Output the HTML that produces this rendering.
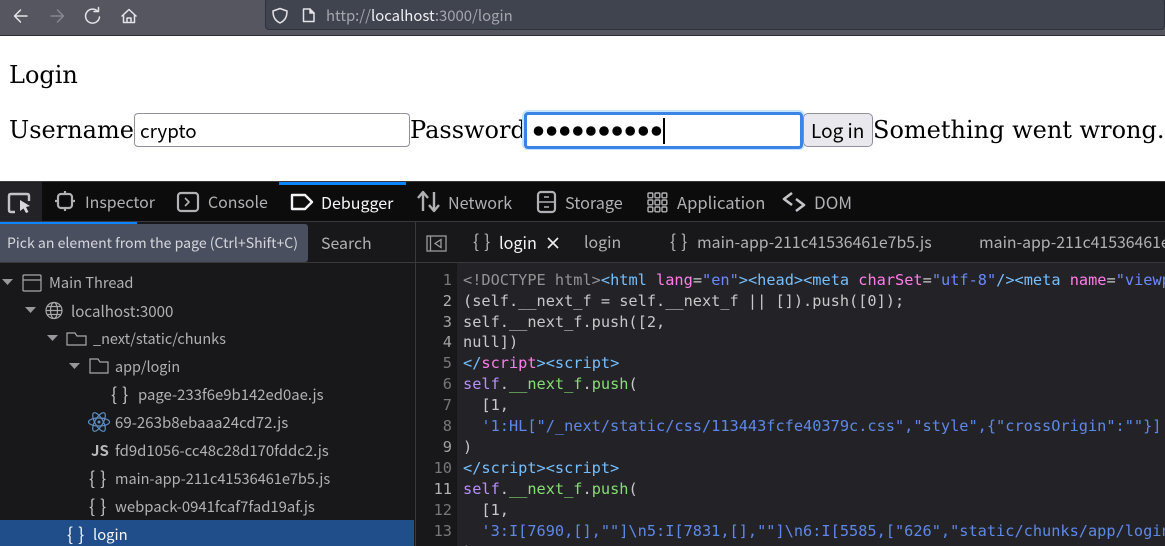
<!DOCTYPE html>
<html><head><meta charset="utf-8"><title>Login</title>
<style>
html,body{margin:0;padding:0;width:1165px;height:546px;overflow:hidden;background:#fff}
#root{position:absolute;left:0;top:0;width:1165px;height:546px;overflow:hidden;background:#fff}
.a,.t,.c,.n{position:absolute;white-space:pre}
.a{display:block}
.t{font-family:"Noto Sans CJK SC","Liberation Sans",sans-serif;font-size:15.9px;line-height:20px;color:#b1b1b3}
.br{font-size:18px;word-spacing:1px;color:#c0c0c2}
.s{font-family:"DejaVu Serif",serif;font-size:24px;line-height:30px;color:#000}
.c{font-family:"DejaVu Sans Mono",monospace;font-size:15.28px;line-height:21px;color:#c8c8ca;left:463px}
.n{font-family:"DejaVu Sans Mono",monospace;font-size:15.28px;line-height:21px;color:#77777b;left:415px;width:37px;text-align:right}
.b{color:#75bfff}.p{color:#ff7de9}.l{color:#6b89ff}.v{color:#b98eff}.g{color:#86de74}.k{color:#5e88e8}
svg{position:absolute;overflow:visible}
</style></head><body>
<div id="root">

<!-- browser chrome -->
<div class="a" style="left:0;top:0;width:1165px;height:35px;background:#55565f"></div>
<div class="a" style="left:0;top:35px;width:1165px;height:1px;background:#2b2a33"></div>
<div class="a" style="left:265px;top:-2px;width:900px;height:32px;background:#40444f;border:1px solid #30323b;border-radius:4px;box-sizing:border-box"></div>
<svg style="left:0;top:0" width="400" height="35" fill="none" stroke-linecap="round" stroke-linejoin="round" stroke-width="1.5">
<path d="M27 16H15M20.5 10 14.5 16 20.5 22" stroke="#e4e4e8"/>
<path d="M51 16H63M57.5 10 63.5 16 57.5 22" stroke="#85868e"/>
<path d="M97.8 11.5A7 7 0 1 0 99.5 17" stroke="#e4e4e8"/><path d="M94 11.5H98.5V7.5" stroke="#e4e4e8"/>
<path d="M122 16 129 9.5 136 16M123.5 15V22.5H134.5V15M127 22.5V18H131V22.5" stroke="#e4e4e8"/>
<path d="M273 11 280 8.5 287 11C287 17 285 20.5 280 23 275 20.5 273 17 273 11Z" stroke="#e4e4e8"/>
<path d="M303.5 9H310L314 13V21.5H303.5Z" stroke="#e4e4e8"/><path d="M310 9V13H314" stroke="#e4e4e8" fill="#e4e4e8"/>
</svg>
<div class="t" style="left:326px;top:6px;font-size:14.9px;color:#a5a6ad">http://<span style="color:#f0f0f4">localhost</span>:3000/login</div>

<!-- page -->
<div class="a s" style="position:absolute;left:9px;top:60px;white-space:pre">Login</div>
<div class="a s" style="position:absolute;left:9px;top:115px;white-space:pre">Username</div>
<div class="a" style="left:134px;top:113px;width:276px;height:34px;border:1px solid #8f8f9d;border-radius:4px;box-sizing:border-box;background:#fff"></div>
<div class="t" style="left:140px;top:121px;font-size:18.8px;color:#000">crypto</div>
<div class="a s" style="position:absolute;left:410px;top:115px;white-space:pre">Password</div>
<div class="a" style="left:522px;top:110px;width:283px;height:40px;border-radius:6px;background:#c7e4fd"></div>
<div class="a" style="left:524px;top:112px;width:279px;height:37px;border:3px solid #3a84e6;border-radius:4px;box-sizing:border-box;background:#fff"></div>
<svg style="left:0;top:0" width="700" height="160" fill="#000">
<circle cx="538.5" cy="131" r="4.8"/><circle cx="551.6" cy="131" r="4.8"/><circle cx="564.7" cy="131" r="4.8"/><circle cx="577.8" cy="131" r="4.8"/><circle cx="590.9" cy="131" r="4.8"/><circle cx="604" cy="131" r="4.8"/><circle cx="617.1" cy="131" r="4.8"/><circle cx="630.2" cy="131" r="4.8"/><circle cx="643.3" cy="131" r="4.8"/><circle cx="656.4" cy="131" r="4.8"/>
<rect x="663" y="118" width="2" height="26"/>
</svg>
<div class="a" style="left:803px;top:113px;width:70px;height:34px;border:1px solid #8f8f9d;border-radius:5px;box-sizing:border-box;background:#e9e9ed"></div>
<div class="t" style="left:811px;top:121px;font-size:19px;color:#000">Log in</div>
<div class="a s" style="position:absolute;left:873px;top:115px;white-space:pre">Something went wrong.</div>

<!-- devtools toolbar -->
<div class="a" style="left:0;top:181px;width:1165px;height:41px;background:#0c0c0d;border-top:1px solid #38383d;box-sizing:border-box"></div>
<div class="a" style="left:0;top:182px;width:42px;height:39px;background:#232327"></div>
<div class="a" style="left:279px;top:182px;width:127px;height:3px;background:#0a84ff"></div>
<div class="a" style="left:0;top:221px;width:1165px;height:1px;background:#38383d"></div>
<div class="a" style="left:0;top:222px;width:137px;height:2px;background:#0a84ff"></div>
<svg style="left:0;top:178px" width="880" height="42" fill="none" stroke="#b1b1b3" stroke-width="2.2" stroke-linejoin="round">
<path d="M15 34H11Q9 34 9 32V18Q9 16 11 16H27Q29 16 29 18V23" stroke="#c4c4c8" stroke-width="2.4"/>
<path d="M20 22 30 28 26 29 28.5 34 26 35 23.5 30.5 20 33Z" fill="#d8d8dc" stroke="none"/>
<rect x="58" y="16" width="14" height="14" rx="3"/><path d="M65 13V16M65 30V33M55 23H58M72 23H75"/>
<rect x="178" y="15" width="20" height="18" rx="3"/><path d="M185 20 189 24 185 28" stroke-width="1.6"/>
<path d="M292 17H305L312 24 305 31H292Z" stroke="#f2f2f4" stroke-width="2.4"/>
<path d="M423 33V15M418 20 423 14 428 20M434 14V33M429 27 434 33 439 27" stroke-width="2.4"/>
<rect x="538" y="14" width="17" height="20" rx="3"/><path d="M538 24H555M544 19H549M544 29H549" stroke-width="1.6"/>
<g stroke-width="1.4"><rect x="648" y="15" width="4.8" height="4.8" rx="1"/><rect x="655" y="15" width="4.8" height="4.8" rx="1"/><rect x="662" y="15" width="4.8" height="4.8" rx="1"/><rect x="648" y="22" width="4.8" height="4.8" rx="1"/><rect x="655" y="22" width="4.8" height="4.8" rx="1"/><rect x="662" y="22" width="4.8" height="4.8" rx="1"/><rect x="648" y="29" width="4.8" height="4.8" rx="1"/><rect x="655" y="29" width="4.8" height="4.8" rx="1"/><rect x="662" y="29" width="4.8" height="4.8" rx="1"/></g>
<path d="M792 15 784 21 792 27M796 21 804 27 796 33" stroke-width="2.6" stroke="#c4c4c8"/>
</svg>
<div class="t" style="left:85px;top:192px">Inspector</div>
<div class="t" style="left:208px;top:192px">Console</div>
<div class="t" style="left:321px;top:192px;color:#f5f5f7;font-size:16px">Debugger</div>
<div class="t" style="left:448px;top:192px;font-size:16.1px">Network</div>
<div class="t" style="left:565px;top:192px;font-size:16.2px">Storage</div>
<div class="t" style="left:677px;top:192px;font-size:16.6px">Application</div>
<div class="t" style="left:814px;top:192px;font-size:17px">DOM</div>

<!-- left panel -->
<div class="a" style="left:0;top:224px;width:415px;height:322px;background:#18181a"></div>
<div class="a" style="left:137px;top:222px;width:278px;height:2px;background:#18181a"></div>
<div class="a" style="left:0;top:262px;width:415px;height:1px;background:#38383d"></div>
<div class="a" style="left:415px;top:222px;width:1px;height:324px;background:#38383d"></div>
<div class="a" style="left:0;top:224px;width:308px;height:38px;background:#4a4f5f;border-radius:0 3px 3px 0"></div>
<div class="t" style="left:7px;top:233px;font-size:14.1px;color:#d5d7dd">Pick an element from the page (Ctrl+Shift+C)</div>
<div class="t" style="left:321px;top:233px;color:#b1b1b3">Search</div>

<div class="a" style="left:0;top:520px;width:414px;height:26px;background:#204e8a"></div>
<svg style="left:0;top:265px" width="130" height="281" fill="#98989c">
<path d="M2 14H13L7.5 20Z"/><path d="M25 42H36L30.5 48Z"/><path d="M47 70H58L52.5 76Z"/><path d="M69 98H80L74.5 104Z"/>
<g fill="none" stroke="#a8a8ac" stroke-width="1.2">
<rect x="23" y="10" width="18" height="16" rx="1"/><path d="M23 15H41"/>
<circle cx="54" cy="45.5" r="8"/><ellipse cx="54" cy="45.5" rx="3.5" ry="8"/><path d="M46 45.5H62M47 41.5H61M47 49.5H61"/>
<path d="M67 80V68H75L77 71H86V80Z"/><path d="M90 108V94H98L100 97H108V108Z"/>
<g stroke="#5c8fc4"><ellipse cx="99" cy="157" rx="10.5" ry="4"/><ellipse cx="99" cy="157" rx="10.5" ry="4" transform="rotate(60 99 157)"/><ellipse cx="99" cy="157" rx="10.5" ry="4" transform="rotate(-60 99 157)"/></g>
</g>
<circle cx="99" cy="157" r="1.5" fill="#5c8fc4"/>
</svg>
<div class="t" style="left:49px;top:273px;font-size:14.6px">Main Thread</div>
<div class="t" style="left:71px;top:301px;font-size:15.1px">localhost:3000</div>
<div class="t" style="left:93px;top:329px;font-size:14.47px">_next/static/chunks</div>
<div class="t" style="left:115px;top:357px;font-size:14.36px">app/login</div>
<div class="t br" style="left:111px;top:384px">{ }</div>
<div class="t" style="left:138px;top:385px;font-size:14.9px">page-233f6e9b142ed0ae.js</div>
<div class="t" style="left:115px;top:413px;font-size:15.05px">69-263b8ebaaa24cd72.js</div>
<div class="t" style="left:91px;top:441px;font-size:15px;font-weight:700;color:#b8b8bb">JS</div>
<div class="t" style="left:115px;top:441px;font-size:14.9px">fd9d1056-cc48c28d170fddc2.js</div>
<div class="t br" style="left:89px;top:468px">{ }</div>
<div class="t" style="left:115px;top:469px;font-size:14.53px">main-app-211c41536461e7b5.js</div>
<div class="t br" style="left:89px;top:496px">{ }</div>
<div class="t" style="left:115px;top:497px;font-size:14.87px">webpack-0941fcaf7fad19af.js</div>
<div class="t br" style="left:67px;top:524px;color:#f0f0f4">{ }</div>
<div class="t" style="left:93px;top:525px;font-size:14.8px;color:#f5f5f7">login</div>

<!-- editor -->
<div class="a" style="left:416px;top:222px;width:749px;height:40px;background:#18181a"></div>
<div class="a" style="left:416px;top:262px;width:749px;height:1px;background:#38383d"></div>
<div class="a" style="left:416px;top:263px;width:41px;height:283px;background:#18181a"></div>
<div class="a" style="left:457px;top:263px;width:708px;height:283px;background:#232327"></div>
<svg style="left:415px;top:225px" width="40" height="40" fill="none" stroke="#9c9ca0" stroke-width="1.3">
<rect x="12" y="11" width="19" height="15"/><path d="M15.5 11V26"/><path d="M26 14.5 20 18.5 26 22.5Z"/>
</svg>
<div class="t br" style="left:473px;top:231px;color:#b1b1b3">{ }</div>
<div class="t" style="left:499px;top:232px;color:#f5f5f7;font-size:16.2px">login</div>
<svg style="left:545px;top:235px" width="16" height="16" stroke="#f0f0f2" stroke-width="1.6"><path d="M3 3 13 13M13 3 3 13"/></svg>
<div class="t" style="left:584px;top:232px">login</div>
<div class="t br" style="left:670px;top:231px;color:#b1b1b3">{ }</div>
<div class="t" style="left:697px;top:232px;font-size:15.84px">main-app-211c41536461e7b5.js</div>
<div class="t" style="left:979px;top:232px;font-size:15.84px">main-app-211c41536461e7b5.js</div>

<div class="a" style="left:0;top:1px;width:1165px;height:545px;overflow:hidden">
<div class="n" style="top:269px">1</div><div class="n" style="top:290px;color:#b1b1b3">2</div><div class="n" style="top:311px;color:#a0a0a3">3</div><div class="n" style="top:331px;color:#a0a0a3">4</div><div class="n" style="top:352px">5</div><div class="n" style="top:373px">6</div><div class="n" style="top:394px">7</div><div class="n" style="top:415px">8</div><div class="n" style="top:436px;color:#a0a0a3">9</div><div class="n" style="top:457px">10</div><div class="n" style="top:478px;color:#b1b1b3">11</div><div class="n" style="top:499px">12</div><div class="n" style="top:520px">13</div><div class="n" style="top:541px">14</div>

<div class="c" style="top:269px;width:702px;overflow:hidden"><span style="color:#939395">&lt;!DOCTYPE html&gt;</span><span class="b">&lt;html</span> <span class="p">lang</span>=<span class="l">"en"</span><span class="b">&gt;&lt;head&gt;&lt;meta</span> <span class="p">charSet</span>=<span class="l">"utf-8"</span><span class="b">/&gt;&lt;meta</span> <span class="p">name</span>=<span class="l">"viewport"</span></div>
<div class="c" style="top:290px">(self.__next_f = self.__next_f || []).push([0]);</div>
<div class="c" style="top:311px">self.__next_f.push([2,</div>
<div class="c" style="top:331px">null])</div>
<div class="c" style="top:352px"><span class="b">&lt;/</span><span class="p">script</span><span class="b">&gt;&lt;script&gt;</span></div>
<div class="c" style="top:373px"><span class="v">self</span>.<span class="g">__next_f</span>.<span class="g">push</span>(</div>
<div class="c" style="top:394px">  [1,</div>
<div class="c k" style="top:415px">  '1:HL["/_next/static/css/113443fcfe40379c.css","style",{"crossOrigin":""}]</div>
<div class="c" style="top:436px">)</div>
<div class="c" style="top:457px"><span class="b">&lt;/script&gt;&lt;script&gt;</span></div>
<div class="c" style="top:478px"><span class="v">self</span>.<span class="g">__next_f</span>.<span class="g">push</span>(</div>
<div class="c" style="top:499px">  [1,</div>
<div class="c k" style="top:520px;width:702px;overflow:hidden">  '3:I[7690,[],""]\n5:I[7831,[],""]\n6:I[5585,["626","static/chunks/app/login</div>
<div class="c" style="top:541px">)</div>
</div>
</div>
</body></html>
